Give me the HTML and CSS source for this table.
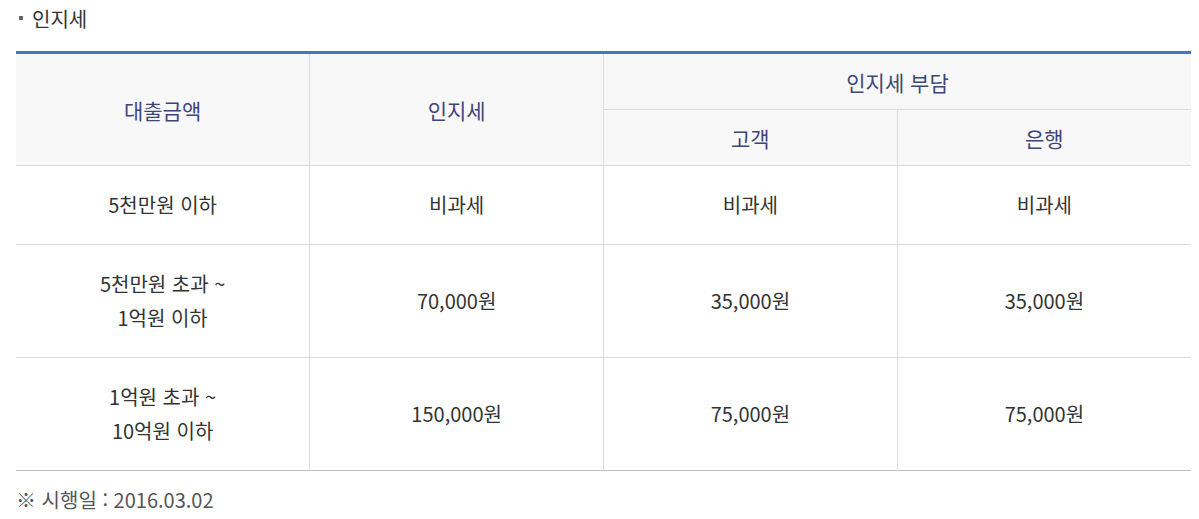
FILE: index.html
```html
<!DOCTYPE html>
<html lang="ko">
<head>
    <meta charset="UTF-8">
    <title>인지세</title>
    <link rel="stylesheet" href="styles.css">
</head>
<body>
    <h4 class="dot-title">인지세</h4>
    <table class="tax-table">
        <thead>
            <tr>
                <th rowspan="2">대출금액</th>
                <th rowspan="2">인지세</th>
                <th colspan="2">인지세 부담</th>
            </tr>
            <tr>
                <th class="sub">고객</th>
                <th class="sub">은행</th>
            </tr>
        </thead>
        <tbody>
            <tr class="short">
                <td>5천만원 이하</td>
                <td>비과세</td>
                <td>비과세</td>
                <td>비과세</td>
            </tr>
            <tr>
                <td>5천만원 초과 ~<br>1억원 이하</td>
                <td>70,000원</td>
                <td>35,000원</td>
                <td>35,000원</td>
            </tr>
            <tr>
                <td>1억원 초과 ~<br>10억원 이하</td>
                <td>150,000원</td>
                <td>75,000원</td>
                <td>75,000원</td>
            </tr>
        </tbody>
    </table>
    <p class="note">※ 시행일 : 2016.03.02</p>
</body>
</html>
```
FILE: styles.css
```css
body {
    margin: 0;
    padding: 0 8px 0 16px;
    font-family: "Noto Sans CJK KR", "Noto Sans", sans-serif;
    color: #333;
    background: #fff;
}
.dot-title {
    position: relative;
    margin: 0;
    padding: 4px 0 0 16px;
    height: 47px;
    font-size: 20px;
    font-weight: 400;
    line-height: 29px;
    color: #333;
}
.dot-title::before {
    content: "";
    position: absolute;
    left: 3px;
    top: 16px;
    width: 4px;
    height: 4px;
    background: #666;
}
.tax-table {
    width: 100%;
    border-collapse: collapse;
    table-layout: fixed;
    border-top: 3px solid #3b78cc;
    border-bottom: 1px solid #bdbcc4;
}
.tax-table th,
.tax-table td {
    border: 1px solid #dcdcdc;
    text-align: center;
    vertical-align: middle;
    padding: 0;
}
.tax-table tr > :first-child {
    border-left: 0;
}
.tax-table tr > :last-child {
    border-right: 0;
}
.tax-table th {
    background: #f8f8f8;
    color: #3e4679;
    font-size: 21px;
    font-weight: 400;
    height: 55px;
}
.tax-table td {
    font-size: 20px;
    line-height: 34px;
    height: 112px;
}
.tax-table tr.short td {
    height: 78px;
}
.tax-table tbody tr:last-child td {
    border-bottom: 0;
}
.note {
    margin: 14px 0 0;
    font-size: 20px;
    color: #555;
}
```
